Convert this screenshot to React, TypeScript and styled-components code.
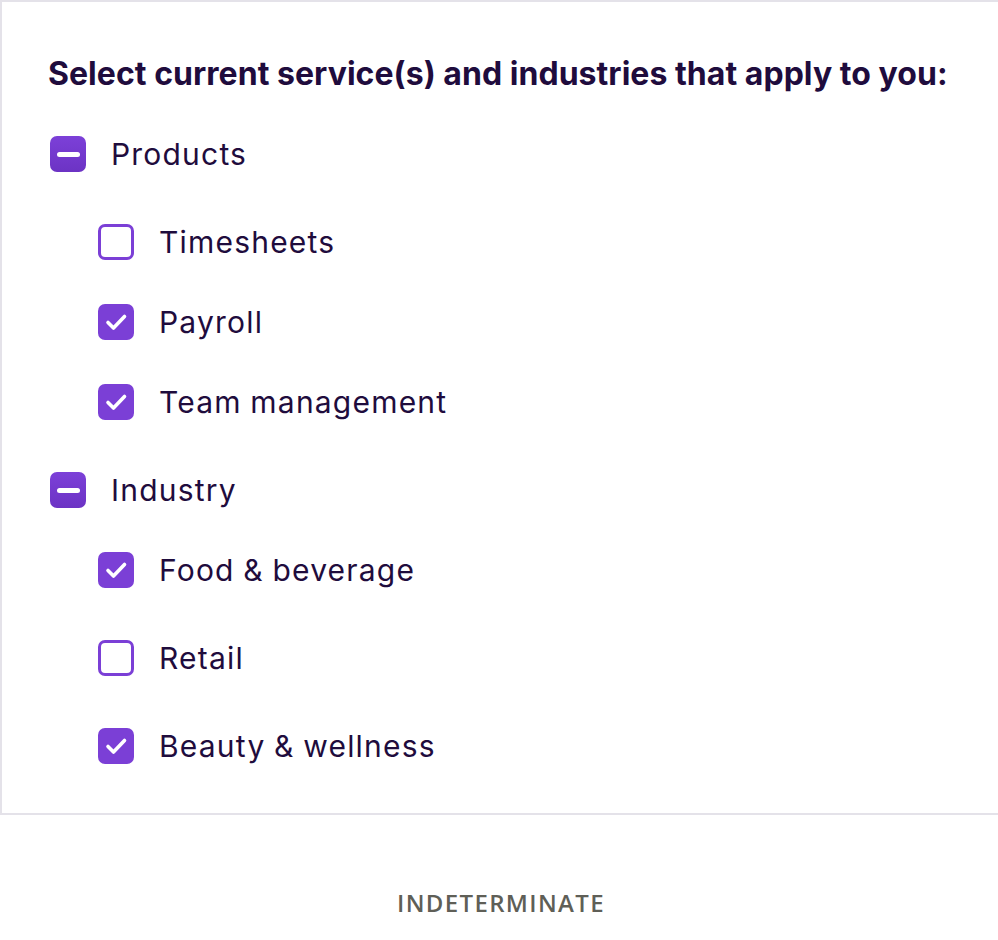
import React from 'react'
import styled, { createGlobalStyle } from 'styled-components'

const GlobalStyle = createGlobalStyle`
  body {
    margin: 0;
    background: #ffffff;
    font-family: Inter, 'Noto Sans', sans-serif;
  }
`

type Item = { label: string; checked: boolean; spaced?: boolean }
type Group = { label: string; spaced?: boolean; items: Item[] }

const groups: Group[] = [
  {
    label: 'Products',
    items: [
      { label: 'Timesheets', checked: false, spaced: true },
      { label: 'Payroll', checked: true },
      { label: 'Team management', checked: true },
    ],
  },
  {
    label: 'Industry',
    spaced: true,
    items: [
      { label: 'Food & beverage', checked: true },
      { label: 'Retail', checked: false, spaced: true },
      { label: 'Beauty & wellness', checked: true, spaced: true },
    ],
  },
]

type BoxState = 'checked' | 'unchecked' | 'mixed'

const Box = ({ state }: { state: BoxState }) => (
  <BoxShape $state={state}>
    {state === 'checked' && (
      <svg width="36" height="36" viewBox="0 0 36 36" fill="none">
        <path
          d="M10 18.5l5.5 5.5L26.5 12.5"
          stroke="#fff"
          strokeWidth="3.6"
          strokeLinecap="round"
          strokeLinejoin="round"
        />
      </svg>
    )}
    {state === 'mixed' && <Dash />}
  </BoxShape>
)

export default function App() {
  return (
    <>
      <GlobalStyle />
      <Frame>
        <Heading>Select current service(s) and industries that apply to you:</Heading>
        <List>
          {groups.map((g) => (
            <React.Fragment key={g.label}>
              <Row $spaced={g.spaced}>
                <Box state="mixed" />
                <Label>{g.label}</Label>
              </Row>
              {g.items.map((it) => (
                <Row key={it.label} $spaced={it.spaced} $child>
                  <Box state={it.checked ? 'checked' : 'unchecked'} />
                  <Label>{it.label}</Label>
                </Row>
              ))}
            </React.Fragment>
          ))}
        </List>
      </Frame>
      <Caption>Indeterminate</Caption>
    </>
  )
}

const Frame = styled.div`
  box-sizing: border-box;
  border: 2px solid #e4e2e9;
  border-right: none;
  padding: 54px 0 47px 46px;
`
const Heading = styled.h2`
  margin: 0;
  font-size: 32px;
  line-height: 36px;
  font-weight: 700;
  color: #1f0c3d;
  letter-spacing: 0.04px;
  white-space: nowrap;
`
const List = styled.div`
  display: flex;
  flex-direction: column;
  margin-top: 42px;
`
const Row = styled.label<{ $spaced?: boolean; $child?: boolean }>`
  display: flex;
  align-items: center;
  height: 40px;
  margin-top: ${(p) => (p.$spaced ? '48px' : '40px')};
  padding-left: ${(p) => (p.$child ? '50px' : '2px')};
  &:first-child {
    margin-top: 0;
  }
`
const BoxShape = styled.span<{ $state: BoxState }>`
  width: 36px;
  height: 36px;
  box-sizing: border-box;
  flex: none;
  border-radius: 7px;
  display: flex;
  align-items: center;
  justify-content: center;
  background: ${(p) =>
    p.$state === 'unchecked'
      ? '#ffffff'
      : p.$state === 'mixed'
      ? 'linear-gradient(180deg, #7c40d8, #6c33c4)'
      : '#7b3fd6'};
  border: ${(p) => (p.$state === 'unchecked' ? '3px solid #7b3fd6' : 'none')};
`
const Dash = styled.span`
  width: 23px;
  height: 5px;
  border-radius: 3px;
  background: #ffffff;
`
const Label = styled.span`
  margin-left: 25px;
  font-size: 30px;
  line-height: 40px;
  color: #1f0c3d;
  font-weight: 400;
  letter-spacing: 1.2px;
  word-spacing: -1px;
`
const Caption = styled.div`
  margin-top: 73px;
  padding-left: 4px;
  text-align: center;
  font-size: 24px;
  line-height: 30px;
  font-weight: 600;
  letter-spacing: 1.35px;
  text-transform: uppercase;
  color: #5f5f57;
  font-family: 'Open Sans', sans-serif;
`
